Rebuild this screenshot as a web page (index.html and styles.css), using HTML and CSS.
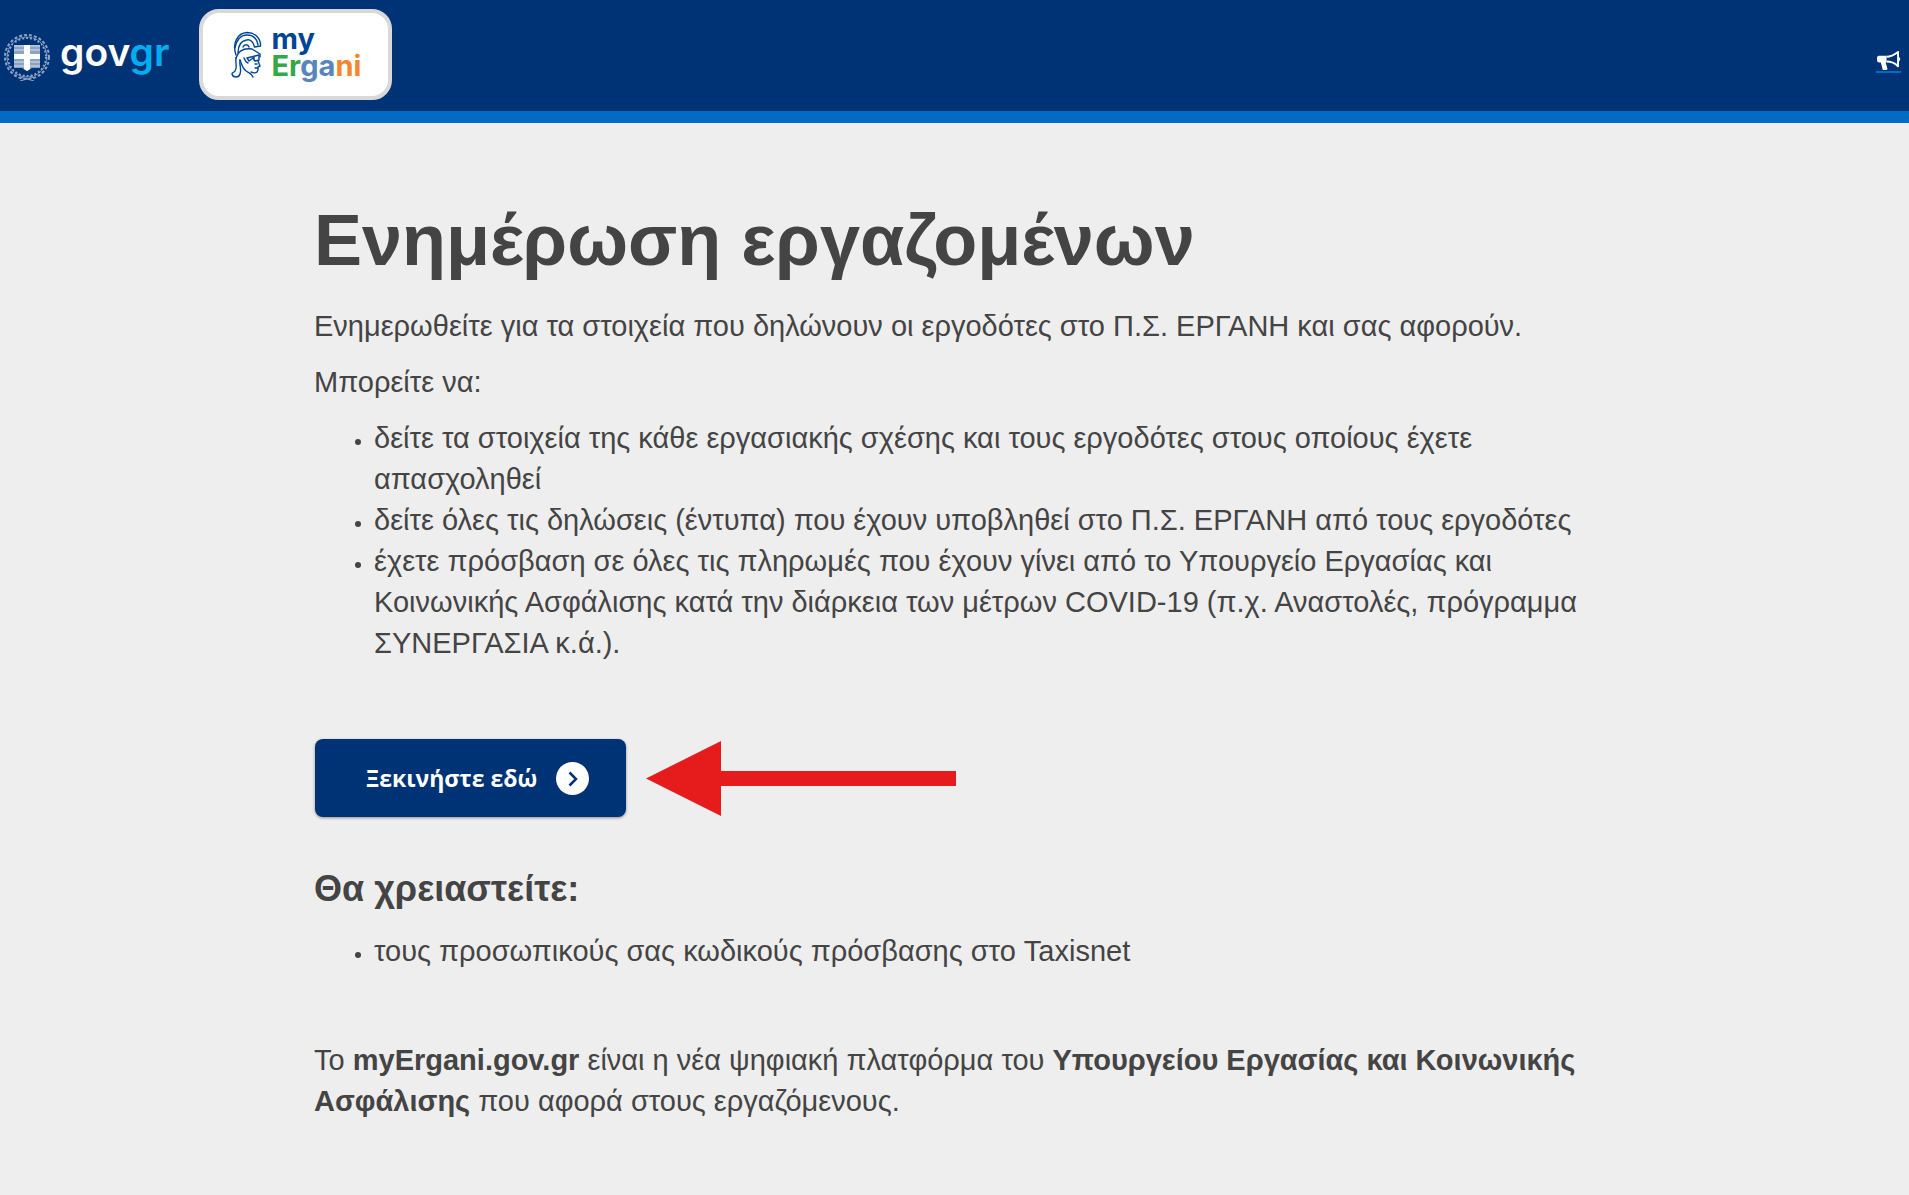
FILE: index.html
```html
<!DOCTYPE html>
<html lang="el">
<head>
  <meta charset="UTF-8">
  <meta name="viewport" content="width=device-width, initial-scale=1">
  <title>myErgani - Ενημέρωση εργαζομένων</title>
  <link rel="stylesheet" href="styles.css">
</head>
<body>
  <header class="header">
    <a class="govgr" href="#">
      <svg class="emblem" viewBox="0 0 48 48" aria-hidden="true">
        <!-- wreath -->
        <g fill="none" stroke="#8ba3c5">
          <circle cx="24" cy="24" r="22" stroke-width="2" stroke-dasharray="3 2"/>
          <circle cx="24" cy="24" r="19" stroke-width="2" stroke-dasharray="2 2"/>
          <circle cx="24" cy="24" r="20" stroke-width="1" stroke-dasharray="4 1"/>
          <path d="M17 44l14 4M31 44l-14 4" stroke-width="1"/>
        </g>
        <!-- shield -->
        <path d="M10 11h28v25h-9l-5 3-5-3h-9z" fill="#003375"/>
        <path d="M11 12h26v23h-8l-5 3-5-3h-8z" fill="#8ba3c5"/>
        <path d="M11 13h26M11 17h26M11 29h26M11 33h26" stroke="#d5deea" stroke-width="1"/>
        <path d="M21 12h6v9h10v5H27v10l-3 2-3-2V26H11v-5h10z" fill="#fff"/>
      </svg>
      <span class="govgr-name">gov<span>gr</span></span>
    </a>
    <a class="ergani" href="#">
      <svg class="athena" viewBox="0 0 32 48" aria-hidden="true">
        <g fill="none" stroke="#004595" stroke-width="1.4" stroke-linecap="round" stroke-linejoin="round">
          <!-- crest -->
          <path d="M5 24C1 13 6 2 16 1.500c8 0 14 6 13.500 13.500l-6 1c-1-5-4-8-8-7C9 10 7 16 7 22"/>
          <path d="M4 17C5 9 10 4 16 4c6 0 10 4 11 10M12 16c1-3 5-3 6 0"/>
          <!-- helmet and hair -->
          <path d="M5 27c2-7 8-10 16-9l8 5v3"/>
          <path d="M5 27c-1 6 2 9-1 13-1 2-3 1-3 3 1 4 7 4 8 0 2-5-1-9 0-14"/>
          <path d="M9 29c2 5 2 7 5 10 3 3 7 3 8 7M13 27c1 3 2 4 4 5"/>
          <!-- visor and face -->
          <path d="M16 27l12-3v5l-4 1-2-3-4 3zM23 26v3"/>
          <path d="M27 30l2 5-2 1v3l-1 2c-1 1-4 1-6 0M24 33h2M24 37h3"/>
        </g>
      </svg>
      <span class="ergani-name">
        <span class="my">my</span>
        <span><span class="green">Er</span><span class="blue">ga</span><span class="orange">ni</span></span>
      </span>
    </a>
    <a class="news" href="#" aria-label="Ανακοινώσεις">
      <svg viewBox="0 0 24 22" aria-hidden="true">
        <path d="M2 6h8v7H9l2 7-1 1H6L4 13H2c-1 0-2-1-2-2V8c0-1 1-2 2-2z" fill="#fff"/>
        <path d="M10 7c5 0 8-2 12-5v15c-4-4-8-5-12-5" fill="none" stroke="#fff" stroke-width="2" stroke-linejoin="round"/>
        <path d="M22 7c3 0 3 5 0 5z" fill="#fff"/>
      </svg>
    </a>
  </header>

  <main class="content">
    <h1>Ενημέρωση εργαζομένων</h1>
    <p>Ενημερωθείτε για τα στοιχεία που δηλώνουν οι εργοδότες στο Π.Σ. ΕΡΓΑΝΗ και σας αφορούν.</p>
    <p>Μπορείτε να:</p>
    <ul>
      <li>δείτε τα στοιχεία της κάθε εργασιακής σχέσης και τους εργοδότες στους οποίους έχετε απασχοληθεί</li>
      <li>δείτε όλες τις δηλώσεις (έντυπα) που έχουν υποβληθεί στο Π.Σ. ΕΡΓΑΝΗ από τους εργοδότες</li>
      <li>έχετε πρόσβαση σε όλες τις πληρωμές που έχουν γίνει από το Υπουργείο Εργασίας και Κοινωνικής Ασφάλισης κατά την διάρκεια των μέτρων COVID-19 (π.χ. Αναστολές, πρόγραμμα ΣΥΝΕΡΓΑΣΙΑ κ.ά.).</li>
    </ul>

    <div class="start">
      <button type="button" class="start-button">
        Ξεκινήστε εδώ
        <svg viewBox="0 0 33 33" aria-hidden="true">
          <circle cx="16.500" cy="16.500" r="16.500" fill="#fff"/>
          <path d="M13.500 10.500l6.500 6.500-6.500 6.500" fill="none" stroke="#003375" stroke-width="2.500"/>
        </svg>
      </button>
      <svg class="arrow" viewBox="0 0 310 75" aria-hidden="true">
        <path d="M0 37.500L75 0v30h235v15H75v30z" fill="#e61c1c"/>
      </svg>
    </div>

    <h2>Θα χρειαστείτε:</h2>
    <ul>
      <li>τους προσωπικούς σας κωδικούς πρόσβασης στο Taxisnet</li>
    </ul>

    <p class="about">Το <strong>myErgani.gov.gr</strong> είναι η νέα ψηφιακή πλατφόρμα του <strong>Υπουργείου Εργασίας και Κοινωνικής Ασφάλισης</strong> που αφορά στους εργαζόμενους.</p>
  </main>
</body>
</html>
```
FILE: styles.css
```css
* { box-sizing: border-box; }
body { margin: 0; background: #eee; color: #444; font-family: Arial, "Liberation Sans", sans-serif; font-size: 29px; line-height: 41px; }
a { text-decoration: none; }

.header { display: flex; align-items: center; padding: 9px 8px 11px 3px; background: #003375; border-bottom: 12px solid #006cc4; }
.govgr { display: flex; align-items: center; gap: 9px; color: #fff; }
.emblem { width: 48px; height: 48px; margin-top: 5px; }
.govgr-name { padding-bottom: 5px; font-family: Inter, sans-serif; font-size: 39px; font-weight: 600; line-height: 48px; }
.govgr-name span { color: #00aeef; }
.ergani { display: flex; align-items: center; gap: 8px; height: 91px; margin-left: 30px; padding: 0 27px 0 28px; background: #fff; border: 4px solid #d8d9da; border-radius: 20px; }
.athena { width: 32px; height: 48px; }
.ergani-name { display: flex; flex-direction: column; padding-bottom: 6px; font-family: Inter, sans-serif; font-size: 29px; font-weight: 700; line-height: 27px; }
.my { color: #004595; }
.green { color: #32a847; }
.blue { color: #5785bd; }
.orange { color: #f5862b; }
.news { margin-left: auto; padding-top: 14px; }
.news svg { display: block; width: 25px; height: 23px; border-bottom: 2px solid #006cc4; }

.content { max-width: 1281px; margin: 0 auto; padding: 75px 0 60px; }
h1 { margin: 0 0 24px; font-size: 72px; line-height: 84px; }
h2 { margin: 50px 0 20px; font-size: 36px; line-height: 44px; }
p { margin: 0 0 15px; }
ul { margin: 0; padding-left: 60px; }
li::marker { font-size: 20px; }

.start { display: flex; align-items: center; flex-wrap: wrap; gap: 20px; margin-top: 75px; }
.start-button { display: flex; align-items: center; gap: 19px; height: 78px; margin-left: 1px; padding: 0 37px 0 51px; background: #003375; color: #fff; border: 0; border-radius: 8px; box-shadow: 0 1px 3px rgba(0, 0, 0, 0.4); cursor: pointer; font-family: "Open Sans", "Noto Sans", sans-serif; font-size: 23px; font-weight: 700; }
.start-button:hover { background: #00265a; }
.start-button svg { width: 33px; height: 33px; }
.arrow { width: 310px; height: 75px; }

.about { margin-top: 68px; }
```
